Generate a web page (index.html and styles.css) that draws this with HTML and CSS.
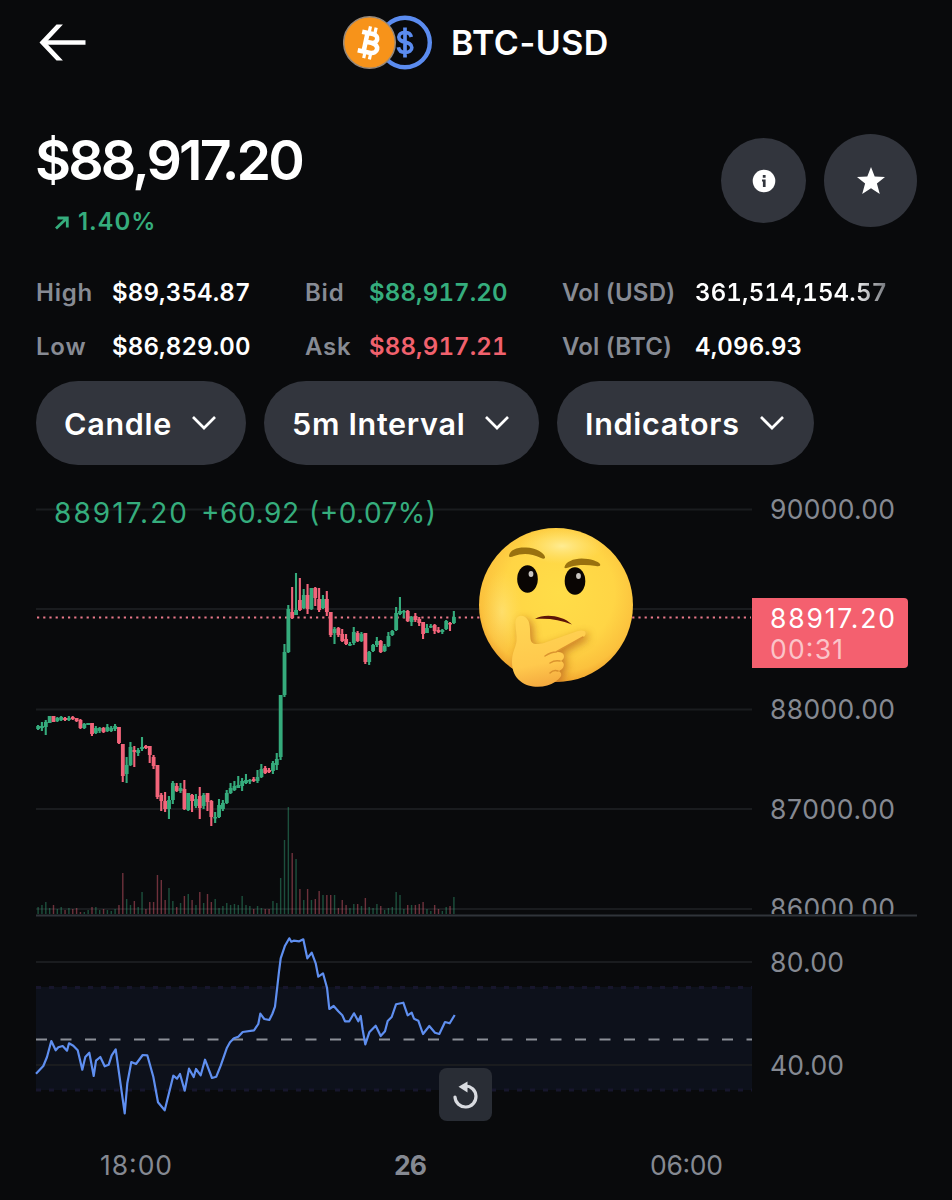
FILE: index.html
```html
<!DOCTYPE html>
<html lang="en">
<head>
<meta charset="utf-8">
<title>BTC-USD</title>
<link rel="stylesheet" href="styles.css">
</head>
<body>
<header class="topbar">
  <svg class="back" width="48" height="40" viewBox="0 0 48 40"><path d="M46.500 19.500H5" stroke="#fff" stroke-width="4.400" fill="none"/><path d="M17.500 1.500h6.400L7 19.500 23.900 37.500h-6.400L.5 19.500z" fill="#fff"/></svg>
  <div class="pair">
    <svg width="90" height="56" viewBox="0 0 90 56">
      <circle cx="62" cy="27.500" r="24.800" fill="none" stroke="#5b8cf0" stroke-width="4.400"/>
      <path d="M62 12.500v30M68.300 22c-.7-3.200-3-4.600-6.300-4.600-3.600 0-6.200 1.700-6.200 4.700 0 6.800 13 3.300 13 10.300 0 3.200-2.700 5-6.500 5-3.700 0-6.400-1.700-6.900-5.200" fill="none" stroke="#5b8cf0" stroke-width="3.700"/>
      <circle cx="26.500" cy="27.500" r="25.800" fill="#f7931a" stroke="#96897c" stroke-width="1.500"/>
      <g transform="rotate(12 26.500 28)" fill="none" stroke="#fff">
        <path d="M22.500 18v19M17 18.500H28c7 0 7 9 0 9h-5.500M28.500 27.500c9 0 8.800 10 0 10H16.500" stroke-width="4.600"/>
        <path d="M24 11.500V18M29.800 11.500V18M24 37.500v6.500M29.800 37.500v6.500" stroke-width="3.200"/>
      </g>
    </svg>
    <h1>BTC-USD</h1>
  </div>
</header>

<section class="summary">
  <div>
    <div class="price">$88,917.20</div>
    <div class="change"><svg width="17" height="17" viewBox="0 0 17 17"><path d="M2 14.500 12 5M3.500 4h9.800v9.500" fill="none" stroke="#35ad7d" stroke-width="2.800"/></svg><span>1.40%</span></div>
  </div>
  <div class="actions">
    <button class="round info" aria-label="Info"><svg width="24" height="24" viewBox="0 0 24 24"><circle cx="12" cy="12" r="11.300" fill="#fff"/><path d="M10.800 6h2.800v2.800h-2.800zM10 10.500h3.600V18h-2.700v-5.500H10z" fill="#32353d"/></svg></button>
    <button class="round fav" aria-label="Favorite"><svg width="30" height="30" viewBox="0 0 30 30"><path d="M15 1l3.700 9.600 10.300.4-8.100 6.500L23.800 28 15 22.300 6.200 28l2.900-10.500L1 11l10.300-.4z" fill="#fff"/></svg></button>
  </div>
</section>

<section class="stats">
  <div class="row"><span class="k k1">High</span><span class="v v1">$89,354.87</span><span class="k k2">Bid</span><span class="v v2 up">$88,917.20</span><span class="k k3">Vol (USD)</span><span class="v fade">361,514,154.57</span></div>
  <div class="row"><span class="k k1">Low</span><span class="v v1">$86,829.00</span><span class="k k2">Ask</span><span class="v v2 down">$88,917.21</span><span class="k k3">Vol (BTC)</span><span class="v">4,096.93</span></div>
</section>

<nav class="filters">
  <button class="pill candle">Candle<svg width="26" height="18" viewBox="0 0 26 18"><path d="M2 3l11 11L24 3" fill="none" stroke="#fff" stroke-width="2.700"/></svg></button>
  <button class="pill interval">5m Interval<svg width="26" height="18" viewBox="0 0 26 18"><path d="M2 3l11 11L24 3" fill="none" stroke="#fff" stroke-width="2.700"/></svg></button>
  <button class="pill indicators">Indicators<svg width="26" height="18" viewBox="0 0 26 18"><path d="M2 3l11 11L24 3" fill="none" stroke="#fff" stroke-width="2.700"/></svg></button>
</nav>

<svg class="chart" width="952" height="734" viewBox="0 466 952 734">
  <defs>
    <clipPath id="pane"><rect x="36" y="465" width="916" height="449"/></clipPath>
    <clipPath id="head"><circle cx="556" cy="605" r="77"/></clipPath>
    <filter id="soft" x="-30%" y="-30%" width="160%" height="160%"><feGaussianBlur stdDeviation="4"/></filter>
    <radialGradient id="face" cx=".52" cy=".42" r=".6"><stop offset="0" stop-color="#ffdd48"/><stop offset=".6" stop-color="#ffd545"/><stop offset=".86" stop-color="#fbc13d"/><stop offset="1" stop-color="#ee9f2c"/></radialGradient>
    <radialGradient id="shine"><stop offset="0" stop-color="#fff0a0" stop-opacity=".85"/><stop offset="1" stop-color="#ffe37a" stop-opacity="0"/></radialGradient>
    <linearGradient id="hand" gradientUnits="userSpaceOnUse" x1="530" y1="615" x2="545" y2="690"><stop offset="0" stop-color="#ffd654"/><stop offset=".65" stop-color="#ffc94d"/><stop offset="1" stop-color="#f2a43c"/></linearGradient>
    <path id="fist" d="M515.500 624c-1-10 9-11 13-3 2.500 6 1 15 2.500 20 2 4 7 3.500 13 2l34-12c9-2.500 10 4 3.500 7.500l-24.500 13.500c8-.5 9 6 4 9 5 2 3 8-2 10 5 4 1 7-4 11-13 9-43 7-43-20 0-10 4-15 4.500-21 .5-6-1-12-1-17z"/>
  </defs>
  <rect x="36" y="987" width="716" height="103" fill="#0d111b"/>
  <path d="M36 987.500h716M36 1090h716" stroke="#17162c" stroke-width="3" stroke-dasharray="5 8"/>
  <path d="M36 509.500h716M36 609h716M36 709.500h716M36 809h716M36 909h716M36 962h716M36 1065h716" stroke="#1a1c1f" stroke-width="2"/>
  <path d="M36 915.500h881" stroke="#30343a" stroke-width="2"/>
  <g id="volume" opacity=".43" clip-path="url(#pane)"></g>
  <path d="M37 617.500h714" stroke="#e9788a" stroke-width="2.200" stroke-dasharray="2.200 4"/>
  <g id="candles"></g>
  <path d="M36 1039.500h716" stroke="#8b8f97" stroke-width="2.200" stroke-dasharray="11 13.500"/>
  <polyline id="rsi" fill="none" stroke="#5f8ff0" stroke-width="2.200" stroke-linejoin="round"/>

  <g class="legend"><text x="54" y="523" textLength="133">88917.20</text><text x="201" y="523" textLength="98">+60.92</text><text x="309" y="523" textLength="127">(+0.07%)</text></g>
  <g class="axis">
    <text x="770" y="518.500" textLength="125">90000.00</text>
    <text x="770" y="718.500" textLength="125">88000.00</text>
    <text x="770" y="818.500" textLength="125">87000.00</text>
    <g clip-path="url(#pane)"><text x="770" y="918" textLength="125">86000.00</text></g>
    <text x="770" y="971.500" textLength="74">80.00</text>
    <text x="770" y="1074.500" textLength="74">40.00</text>
    <text x="100" y="1174.500" textLength="72">18:00</text>
    <text x="394" y="1174.500" textLength="33" class="day">26</text>
    <text x="650" y="1174.500" textLength="73">06:00</text>
  </g>
  <path d="M752 598h152a4 4 0 0 1 4 4v62a4 4 0 0 1-4 4H752z" fill="#f4606f"/>
  <g class="tag"><text x="770" y="627.500" textLength="125">88917.20</text><text x="770" y="658.500" textLength="73" class="countdown">00:31</text></g>

  <g class="thinking">
    <circle cx="556" cy="605" r="77" fill="url(#face)"/>
    <g clip-path="url(#head)">
      <ellipse cx="562" cy="546" rx="42" ry="18" fill="url(#shine)"/>
      <ellipse cx="502" cy="612" rx="20" ry="42" fill="url(#shine)" opacity=".5"/>
      <use href="#fist" x="3" y="3" fill="#b8621a" opacity=".75" filter="url(#soft)"/>
    </g>
    <path d="M509 555.500c1-6 9-8.500 17-8 10 .5 18 5 19 9.500.5 2-2 2-4 1-10-5-19-5-27-2-3 1.500-5 1.500-5-.5zM564.500 567c1-5 9-8.500 17-8.500 9 0 17 3 18.500 5.500 1 2-1 2.500-4 2-9-1.500-18-1.500-26 1-3 1-5.500 2-5.500 0z" fill="#99710f"/>
    <ellipse cx="527.500" cy="579" rx="10.300" ry="13.700" fill="#090503"/><ellipse cx="575" cy="581" rx="10.300" ry="13.700" fill="#090503"/>
    <ellipse cx="531" cy="574" rx="2.400" ry="3" fill="#c8c5c0"/><ellipse cx="578.500" cy="576" rx="2.400" ry="3" fill="#c8c5c0"/>
    <path d="M535 619c9-5.500 27-4 37 5.500-12-5-24-6.500-37-5.500z" fill="#5c1408"/>
    <use href="#fist" fill="url(#hand)"/>
    <path d="M583 637l-27 15c-5 0-8 2-11 4M560 661c-4-1-7 0-10 2M558 671c-3-1-6 0-8 2" fill="none" stroke="#cf8224" stroke-width="1.500" stroke-linecap="round" opacity=".75"/>
  </g>

  <rect x="439" y="1068" width="53" height="53" rx="8" fill="#292d35"/>
  <path d="M455 1097a10.500 10.500 0 1 0 10-11" fill="none" stroke="#d9dbe0" stroke-width="3.200" stroke-linecap="round"/><path d="M458.500 1086.700 467.500 1081.500v11z" fill="#d9dbe0"/>
</svg>
<script src="chart.js"></script>
</body>
</html>
```
FILE: styles.css
```css
* { box-sizing: border-box; }
body { margin: 0; width: 952px; height: 1200px; overflow: hidden; background: #090a0c; color: #fff; font-family: Inter, "Liberation Sans", sans-serif; }
button { border: 0; padding: 0; background: #32353d; color: #fff; font-family: inherit; display: flex; align-items: center; }
svg { display: block; flex: none; }
.topbar { display: flex; align-items: center; height: 86px; padding-left: 39px; }
.pair { display: flex; align-items: center; gap: 18px; margin-left: 256px; }
.pair h1 { margin: 0; font-size: 34px; font-weight: 600; letter-spacing: .5px; line-height: 40px; }
.summary { display: flex; justify-content: space-between; height: 178px; padding: 40px 35px 0 36px; }
.price { font-size: 55.500px; line-height: 67px; font-weight: 600; letter-spacing: -2.900px; margin-left: -1px; }
.change { display: flex; align-items: center; gap: 7px; margin: 14px 0 0 18px; color: #35ad7d; font-size: 24px; line-height: 30px; font-weight: 600; letter-spacing: .9px; }
.actions { display: flex; align-items: center; gap: 18px; height: 109px; }
.round { border-radius: 50%; justify-content: center; }
.info { width: 85px; height: 85px; }
.fav { width: 93px; height: 93px; }
.stats { height: 117px; padding: 13px 0 0 36px; font-size: 24px; font-weight: 600; }
.row { display: flex; line-height: 32px; height: 53.500px; white-space: nowrap; }
.v { font-variant-numeric: tabular-nums; letter-spacing: .15px; }
.k { color: #878b94; font-weight: 600; letter-spacing: .8px; }
.k1 { width: 76px; } .v1 { width: 193px; } .k2 { width: 64px; } .v2 { width: 193px; } .k3 { width: 133px; letter-spacing: .2px; }
.up { color: #35ad7d; } .down { color: #f0616d; }
.fade { background: linear-gradient(90deg, #fff 82%, #71747a 100%); background-clip: text; -webkit-background-clip: text; color: transparent; }
.filters { display: flex; gap: 18px; height: 85px; padding-left: 36px; }
.pill { height: 84px; border-radius: 42px; padding: 0 29px 0 28px; justify-content: space-between; font-size: 30.500px; font-weight: 600; letter-spacing: .7px; white-space: nowrap; }
.candle { width: 210px; } .interval { width: 275px; } .indicators { width: 257px; }
.axis { fill: #858992; font-size: 26.500px; }
.day { font-weight: 700; }
.legend { fill: #35ad7d; font-size: 28px; }
.tag { fill: #fff; font-size: 26.500px; }
.countdown { fill: #fbc4c9; }
```
FILE: chart.js
```js
// Each candle: high, body top, body bottom, low, direction, volume height.
const candles = `725 726 729 730 g 7|722 726 728 731 g 9|720 722 727 735 g 12|716 716 723 723 g 6|716 716 722 722 r 9|717 718 721 722 g 5|716 717 720 721 g 7|717 718 720 721 r 4|716 718 720 721 g 6|716 717 719 720 r 5|718 718 721 722 r 6|719 720 728 729 r 2|723 724 728 729 g 2|723 723 725 725 g 4|723 723 734 736 r 7|726 728 733 734 g 7|727 728 731 733 g 4|727 728 732 733 r 5|724 727 731 732 g 4|726 728 731 732 g 3|724 726 729 731 g 5|727 727 743 744 r 9|744 744 776 782 r 41|757 765 774 783 g 15|742 747 765 766 g 9|746 750 752 767 r 13|748 750 753 756 g 7|737 747 749 751 g 22|745 746 748 749 r 5|746 746 755 763 r 12|755 757 766 769 r 12|765 765 797 799 r 39|793 795 801 811 r 34|792 801 809 812 r 14|796 800 809 819 g 26|781 783 800 804 g 13|783 786 791 792 r 7|783 788 791 793 g 11|780 789 809 810 r 18|793 793 810 811 g 20|794 795 801 812 r 14|794 799 806 808 g 9|787 796 808 819 r 22|793 795 806 809 g 11|793 793 802 811 r 20|800 801 817 826 r 12|812 817 818 823 g 15|799 805 817 818 g 6|800 803 809 811 g 8|790 793 803 804 g 11|783 788 793 794 g 9|781 786 790 791 g 10|776 785 788 788 g 9|778 781 786 791 g 18|774 780 783 784 g 9|779 780 781 784 g 8|777 779 781 782 r 5|770 777 781 783 g 8|764 769 777 778 g 6|766 768 773 774 r 5|768 770 772 773 r 5|761 763 771 774 g 13|753 759 765 770 g 11|695 695 757 760 g 36|644 652 695 697 g 74|605 609 652 653 g 107|587 612 618 619 r 61|573 610 615 615 g 55|578 600 610 611 r 25|589 595 608 609 g 14|584 595 609 614 r 25|588 588 609 610 g 14|587 588 598 606 r 15|588 599 610 612 r 23|595 599 608 609 g 19|591 599 612 616 r 19|612 612 635 637 r 19|627 629 633 644 g 19|627 628 635 637 r 6|629 634 641 642 r 14|634 639 644 645 r 9|642 644 645 646 g 6|627 632 643 645 g 10|631 633 641 642 r 10|632 634 641 642 g 8|633 633 662 664 r 16|651 652 662 665 g 7|644 645 651 652 g 6|637 641 645 647 g 10|640 641 652 653 r 8|644 646 651 652 g 4|632 636 646 647 g 6|630 631 635 636 g 7|607 613 630 631 g 22|597 611 614 615 g 19|610 611 612 618 g 5|610 611 621 622 r 9|616 617 622 626 g 9|613 616 620 622 r 9|617 619 623 626 r 10|622 622 634 639 r 12|624 628 633 633 g 5|624 626 627 628 g 3|624 625 631 634 r 9|627 630 632 633 r 5|629 630 632 634 g 3|620 621 629 630 g 7|622 623 624 631 r 8|611 617 623 624 g 17`;

const GREEN = '#35ab7c', RED = '#f2647a';
const draw = (parent, x, y, width, height, fill) => {
  const r = document.createElementNS('http://www.w3.org/2000/svg', 'rect');
  Object.entries({ x, y, width, height, fill }).forEach(([k, v]) => r.setAttribute(k, v));
  parent.appendChild(r);
};
const candleLayer = document.getElementById('candles');
const volumeLayer = document.getElementById('volume');
candles.split('|').forEach((row, i) => {
  const [high, top, bottom, low, dir, vol] = row.split(' ');
  const x = 38 + i * 3.85;
  const fill = dir === 'g' ? GREEN : RED;
  draw(candleLayer, x - 1, +high, 2.1, low - high, fill);
  draw(candleLayer, x - 1.8, +top, 3.85, Math.max(bottom - top, 1.5), fill);
  draw(volumeLayer, x - 0.6, 914 - vol, 1.4, +vol, fill);
});

// Oscillator samples are stored in thirds of a pixel, relative to each segment's origin.
const left = [18,461,40,438,51,411,64,363,77,391,85,382,98,378,111,392,117,370,130,377,143,391,157,449,166,411,178,398,191,468,198,422,211,411,224,439,236,434,245,406,257,388,284,580,292,490,304,426,318,432,338,405,352,406,370,470,384,547,404,571,430,467,441,476,450,462,464,512,477,446,491,471,498,447,512,466,525,419,546,474,559,470,572,437,590,385,600,367,612,355,625,350,638,336,672,331,685,312,691,281];
const right = [13,297,28,300,37,282,45,260,52,200,57,155,62,115,75,77,88,55,94,65,101,62,118,64,130,58,142,115,155,98,167,130,175,170,189,160,201,203,208,267,221,258,235,274,247,286,255,304,268,304,282,280,295,304,302,288,308,330,316,373,328,337,347,317,362,348,375,334,383,303,395,291,408,253,430,248,443,286,455,278,462,296,475,302,489,342,508,318,525,338,538,342,555,306,569,310,584,285];
const toPoints = (a, origin) => {
  const out = [];
  for (let i = 0; i < a.length; i += 2) out.push(`${(origin + a[i] / 3).toFixed(1)},${(920 + a[i + 1] / 3).toFixed(1)}`);
  return out;
};
document.getElementById('rsi').setAttribute('points', [...toPoints(left, 30), ...toPoints(right, 260)].join(' '));
```
